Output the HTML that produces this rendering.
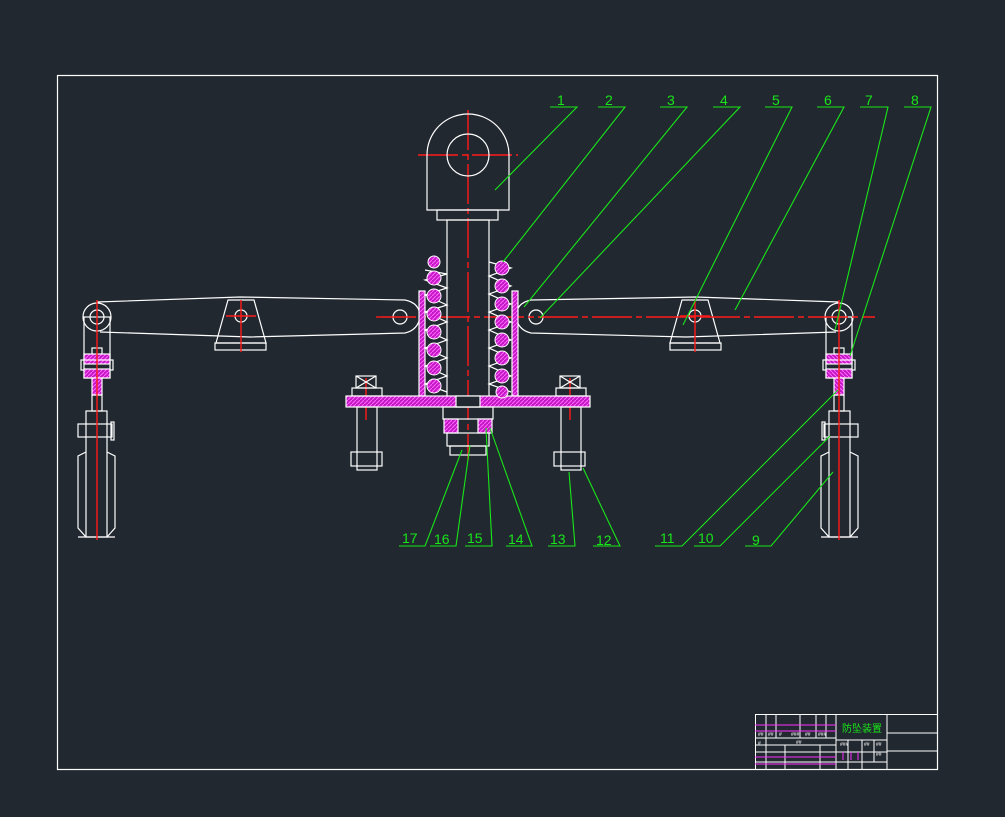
<!DOCTYPE html>
<html><head><style>
html,body{margin:0;padding:0;background:#212830;}
svg{display:block}
text{font-family:"Liberation Sans","Noto Sans CJK SC",sans-serif;}
</style></head><body>
<svg width="1005" height="817" viewBox="0 0 1005 817" xmlns="http://www.w3.org/2000/svg">
<defs>
<pattern id="h" width="4" height="4" patternUnits="userSpaceOnUse"><rect width="4" height="4" fill="#c418c4"/><path d="M0 4L4 0" stroke="#ff66ff" stroke-width="1"/></pattern>
<g id="side" fill="none" stroke="#fff" stroke-width="1.2">
  <!-- arm -->
  <path d="M97 302 L240 297 L405 300 Q420 303 420 317 Q418 330 405 333 L250 337 L100 332"/>
  <circle cx="97" cy="317" r="14"/>
  <circle cx="97" cy="317" r="7"/>
  <circle cx="400" cy="317" r="7"/>
  <!-- bracket -->
  <path d="M228 300 L254 300 L266 343 L216 343 Z"/>
  <circle cx="241" cy="316" r="6"/>
  <rect x="215" y="343" width="51" height="7"/>
  <!-- hanger -->
  <rect x="84" y="317" width="26" height="61"/>
  <rect x="92" y="348" width="10" height="8"/>
  <rect x="84" y="354" width="26" height="10" fill="url(#h)"/>
  <rect x="81" y="360" width="32" height="10"/>
  <rect x="84" y="369" width="26" height="9" fill="url(#h)"/>
  <rect x="92" y="378" width="10" height="17" fill="url(#h)"/>
  <rect x="92" y="395" width="10" height="16"/>
  <rect x="86" y="411" width="21" height="126"/>
  <rect x="78" y="424" width="34" height="13"/>
  <rect x="111" y="422" width="3" height="18"/>
  <path d="M86 452 L78 456 L78 528 L86 537 M107 452 L115 456 L115 528 L107 537 M78 537 L115 537"/>
</g>
</defs>
<rect x="57.5" y="75.5" width="880" height="694" fill="none" stroke="#fff" stroke-width="1.2"/>
<use href="#side"/>
<use href="#side" transform="translate(936 0) scale(-1 1)"/>
<!-- red center lines -->
<g stroke="#ff1a1a" stroke-width="1.4" fill="none">
<path d="M468 110 V460 M418 155 H518" stroke-dasharray="40 4 6 4"/>
<path d="M376 317 H875" stroke-dasharray="40 4 6 4"/>
<path d="M97 300 V540 M839 300 V540 M241 300 V352 M695 300 V352 M226 316 H256 M680 316 H710"/>
<path d="M366 378 V420 M570 378 V420"/>
</g>
<!-- eye -->
<g fill="none" stroke="#fff" stroke-width="1.2">
<path d="M427 210 V155 A40 40 0 0 1 509 155 V210 Z"/>
<circle cx="468" cy="155" r="21"/>
<rect x="437" y="210" width="61" height="10"/>
<rect x="447" y="220" width="42" height="177"/>
<!-- housings -->
<rect x="419" y="291" width="6" height="105" fill="url(#h)"/>
<rect x="512" y="291" width="6" height="105" fill="url(#h)"/>
<!-- base plate -->
<rect x="346" y="396" width="244" height="11" fill="url(#h)"/>
<rect x="456" y="396" width="24" height="11" fill="#212830"/>
<!-- nut under -->
<rect x="443" y="407" width="50" height="12"/>
<rect x="444" y="419" width="14" height="14" fill="url(#h)"/>
<rect x="478" y="419" width="14" height="14" fill="url(#h)"/>
<rect x="447" y="433" width="42" height="13"/>
<rect x="450" y="446" width="36" height="9"/>
<!-- bolts -->
<rect x="356" y="376" width="20" height="12"/>
<path d="M356 376 L376 388 M376 376 L356 388"/>
<rect x="352" y="388" width="30" height="8"/>
<rect x="357" y="407" width="20" height="63"/>
<rect x="351" y="452" width="31" height="14"/>
<rect x="560" y="376" width="20" height="12"/>
<path d="M560 376 L580 388 M580 376 L560 388"/>
<rect x="556" y="388" width="30" height="8"/>
<rect x="561" y="407" width="20" height="63"/>
<rect x="554" y="452" width="31" height="14"/>
<!-- spring zigzag -->
<path d="M425 270 L447 274 L425 280 L447 288 L425 295 L447 305 L425 312 L447 322 L425 330 L447 340 L425 348 L447 358 L425 366 L447 376 L425 384 L447 392"/>
<path d="M489 262 L511 268 L489 276 L511 286 L489 294 L511 304 L489 312 L511 322 L489 330 L511 340 L489 348 L511 358 L489 366 L511 376 L489 384 L511 392"/>
</g>
<g fill="url(#h)" stroke="#fff" stroke-width="1">
<circle cx="434" cy="262" r="6"/><circle cx="434" cy="278" r="7"/><circle cx="434" cy="296" r="7"/><circle cx="434" cy="314" r="7"/><circle cx="434" cy="332" r="7"/><circle cx="434" cy="350" r="7"/><circle cx="434" cy="368" r="7"/><circle cx="434" cy="386" r="7"/>
<circle cx="502" cy="268" r="7"/><circle cx="502" cy="286" r="7"/><circle cx="502" cy="304" r="7"/><circle cx="502" cy="322" r="7"/><circle cx="502" cy="340" r="7"/><circle cx="502" cy="358" r="7"/><circle cx="502" cy="376" r="7"/><circle cx="502" cy="392" r="6"/>
</g>
<!-- leader lines -->
<g stroke="#19e619" stroke-width="1.1" fill="none">
<path d="M550 107 H577 L495 190"/>
<path d="M598 107 H625 L503 262"/>
<path d="M660 107 H687 L524 307"/>
<path d="M713 107 H740 L540 318"/>
<path d="M765 107 H792 L683 325"/>
<path d="M817 107 H844 L735 310"/>
<path d="M860 107 H888 L835 330"/>
<path d="M904 107 H931 L850 356"/>
<path d="M399 546 H425 L462 450"/>
<path d="M430 546 H456 L470 445"/>
<path d="M465 546 H492 L486 428"/>
<path d="M506 546 H532 L490 428"/>
<path d="M548 546 H575 L569 472"/>
<path d="M593 546 H620 L583 468"/>
<path d="M655 546 H682 L838 390"/>
<path d="M694 546 H720 L830 436"/>
<path d="M745 546 H771 L833 472"/>
</g>
<g fill="#19e619" font-size="14">
<text x="557" y="105">1</text><text x="605" y="105">2</text><text x="667" y="105">3</text><text x="720" y="105">4</text><text x="772" y="105">5</text><text x="824" y="105">6</text><text x="865" y="105">7</text><text x="911" y="105">8</text>
<text x="402" y="543">17</text><text x="434" y="544">16</text><text x="467" y="543">15</text><text x="508" y="544">14</text><text x="550" y="544">13</text><text x="596" y="545">12</text><text x="660" y="543">11</text><text x="698" y="543">10</text><text x="752" y="545">9</text>
</g>
<!-- title block -->
<g fill="none" stroke="#fff" stroke-width="1">
<rect x="755.5" y="714.5" width="182" height="55"/>
<path d="M836 714 V769 M887 714 V769 M887 733 H937 M887 751 H937 M836 740 H887 M755 738 H836 M755 745 H836 M755 752 H836 M755 762 H836 M836 752 H887 M836 762 H887"/>
<path d="M766 714 V769 M776 714 V738 M800 714 V738 M816 714 V738 M826 714 V738 M785 745 V769 M820 745 V769 M848 740 V769 M862 740 V769 M874 740 V762"/>
</g>
<g stroke="#ff30ff" stroke-width="1"><path d="M755 725 H836 M755 731 H836 M755 757 H836 M755 764 H836 M843 752 V760 M851 752 V760 M858 752 V760"/></g>
<text x="842" y="732" font-size="10" fill="#19e619">防坠装置</text>
<g fill="#fff" font-size="5"><text x="758" y="736">##</text><text x="768" y="736">##</text><text x="779" y="736">#</text><text x="791" y="736">###</text><text x="805" y="736">##</text><text x="818" y="736">###</text><text x="758" y="745">#</text><text x="796" y="744">##</text><text x="840" y="746">###</text><text x="864" y="746">##</text><text x="876" y="746">##</text><text x="876" y="756">##</text></g>
</svg>
</body></html>
